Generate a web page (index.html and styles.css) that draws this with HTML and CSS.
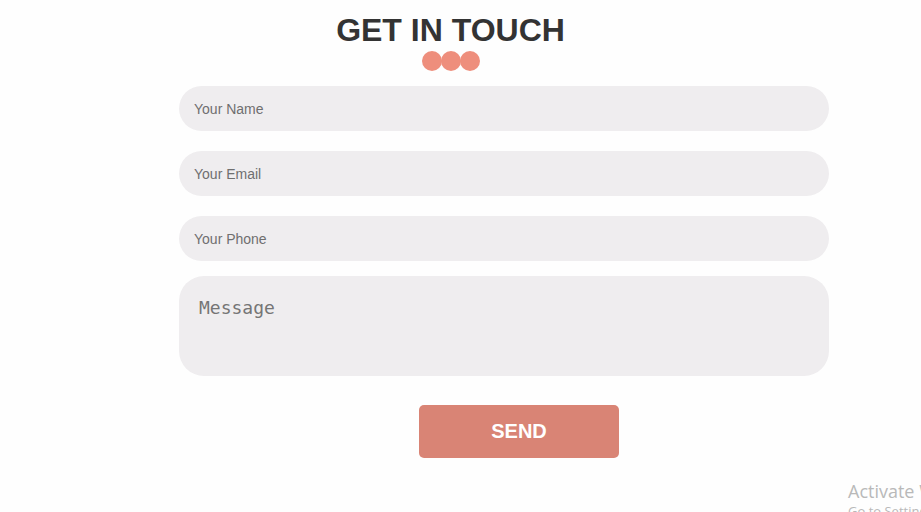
FILE: index.html
```html
<!DOCTYPE html>
<html lang="en">
<head>
<meta charset="utf-8">
<title>Get in touch</title>
<link rel="stylesheet" href="styles.css">
</head>
<body>
<header class="heading">
  <h1 class="title">GET IN TOUCH</h1>
  <div class="dots"><span class="dot"></span><span class="dot"></span><span class="dot"></span></div>
</header>
<form class="contact">
  <input class="field" type="text" placeholder="Your Name">
  <input class="field" type="email" placeholder="Your Email">
  <input class="field" type="tel" placeholder="Your Phone">
  <textarea class="message" placeholder="Message"></textarea>
  <button class="send" type="button">SEND</button>
</form>
<div class="watermark">
  <div class="wm-title">Activate Windows</div>
  <div class="wm-sub">Go to Settings to activate Windows.</div>
</div>
</body>
</html>
```
FILE: styles.css
```css
html, body {
  margin: 0;
  padding: 0;
  background: #fefefe;
  overflow: hidden;
  height: 512px;
}
body {
  font-family: "Liberation Sans", Arial, sans-serif;
  position: relative;
}
.heading {
  display: flex;
  flex-direction: column;
  align-items: center;
  padding-right: 20px;
}
.title {
  margin: 12px 0 0;
  font-size: 32px;
  line-height: 37px;
  font-weight: 700;
  color: #333333;
}
.dots {
  display: flex;
  margin-top: 2px;
}
.dot {
  width: 20px;
  height: 20px;
  border-radius: 50%;
  background: #ee8e7c;
  margin-left: -1px;
}
.dot:first-child {
  margin-left: 0;
}
.contact {
  display: flex;
  flex-direction: column;
  width: 650px;
  margin: 15px 0 0 179px;
}
.field {
  box-sizing: border-box;
  height: 45px;
  border: none;
  outline: none;
  border-radius: 23px;
  background: #efedef;
  padding: 0 15px;
  font-family: "Liberation Sans", Arial, sans-serif;
  font-size: 14px;
  color: #333;
  margin-bottom: 20px;
}
.field:nth-of-type(3) {
  margin-bottom: 15px;
}
.field::placeholder {
  color: #6f6f6f;
}
.message {
  box-sizing: border-box;
  height: 100px;
  border: none;
  outline: none;
  resize: none;
  border-radius: 25px;
  background: #efedef;
  padding: 21px 20px 19px;
  font-family: "DejaVu Sans Mono", monospace;
  font-size: 18px;
  line-height: 21px;
}
.message::placeholder {
  color: #757575;
}
.send {
  align-self: flex-start;
  margin: 29px 0 0 240px;
  width: 200px;
  height: 53px;
  border: none;
  border-radius: 5px;
  background: #d98475;
  color: #ffffff;
  font-family: "Liberation Sans", Arial, sans-serif;
  font-size: 20px;
  font-weight: 700;
}
.watermark {
  position: absolute;
  left: 848px;
  top: 479px;
  white-space: nowrap;
  color: #b9b9b9;
  font-family: "Open Sans", sans-serif;
}
.wm-title {
  font-size: 18px;
  line-height: 24px;
}
.wm-sub {
  font-size: 13px;
  line-height: 16px;
}
```
